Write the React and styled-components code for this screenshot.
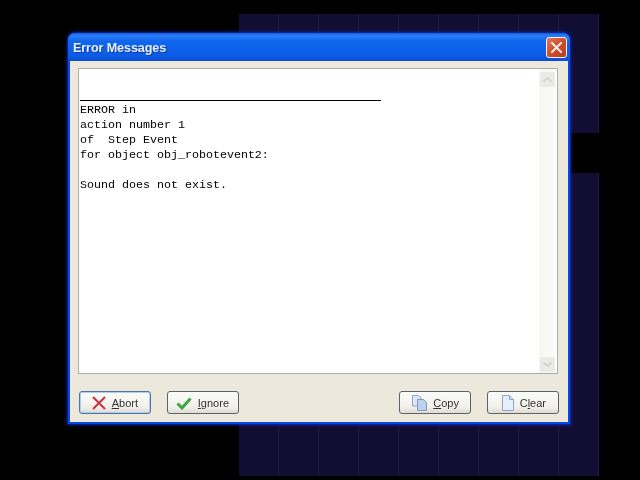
import React from "react";
import styled, {createGlobalStyle} from "styled-components";

const Global = createGlobalStyle`
  html, body {
    margin: 0;
    padding: 0;
    background: #000;
  }
`;

const Desktop = styled.div`
  position: relative;
  width: 640px;
  height: 480px;
  overflow: hidden;
  background: #000;
  filter: blur(0.4px);
`;

const Room = styled.div`
  position: absolute;
  left: 239px;
  top: 14px;
  width: 360px;
  height: 462px;
  background-color: #120d33;
  background-image: repeating-linear-gradient(
    to right,
    #120d33 0,
    #120d33 39px,
    #1f1b44 39px,
    #1f1b44 40px
  );
`;

const Gap = styled.div`
  position: absolute;
  right: 0;
  top: 119px;
  width: 60px;
  height: 40px;
  background: #000;
`;

const Window = styled.div`
  position: absolute;
  left: 68px;
  top: 33px;
  width: 502px;
  height: 391px;
  box-sizing: border-box;
  display: flex;
  flex-direction: column;
  border-radius: 7px 7px 0 0;
  background: #0a46e0;
  padding: 0 2px 2px;
  box-shadow: 0 0 3px 1px #0a2cc0;
`;

const TitleBar = styled.div`
  height: 28px;
  flex: none;
  margin: 0 -2px;
  padding: 0 3px 0 5px;
  display: flex;
  align-items: center;
  justify-content: space-between;
  border-radius: 7px 7px 0 0;
  background: linear-gradient(
    to bottom,
    #0f62ea 0,
    #2a7ef6 3px,
    #1066ee 8px,
    #0c5ce6 22px,
    #0a4ed6 100%
  );
`;

const Title = styled.span`
  padding-top: 2px;
  color: #e8f0ff;
  font: bold 12.6px "Liberation Sans", Arial, sans-serif;
  letter-spacing: -0.1px;
  text-shadow: 1px 1px 0 #0a3aa8;
`;

const CloseButton = styled.div`
  width: 21px;
  height: 21px;
  box-sizing: border-box;
  display: flex;
  align-items: center;
  justify-content: center;
  border: 1px solid #f2f2f2;
  border-radius: 3px;
  background: linear-gradient(135deg, #e07a5c, #cf4f2c 50%, #b83c1c);
`;

const Body = styled.div`
  flex: 1;
  display: flex;
  flex-direction: column;
  background: #ece9dc;
`;

const Editor = styled.div`
  height: 306px;
  margin: 7px 10px 0 8px;
  box-sizing: border-box;
  display: flex;
  justify-content: space-between;
  background: #fff;
  border: 1px solid #a8aeac;
`;

const Log = styled.div`
  padding: 31px 0 0 1px;
  color: #000;
  font: 11.67px/15px "Liberation Mono", "Courier New", monospace;
  white-space: pre;
`;

const Rule = styled.div`
  width: 301px;
  height: 1px;
  margin-bottom: 2px;
  background: #000;
`;

const Scrollbar = styled.div`
  width: 17px;
  margin-right: 1px;
  display: flex;
  flex-direction: column;
  justify-content: space-between;
  background: linear-gradient(to right, #f6f6f3, #fbfbf9);
`;

const ScrollButton = styled.div`
  height: 15px;
  margin: ${props => (props.$down ? "0 1px 1px" : "3px 1px 0")};
  display: flex;
  align-items: center;
  justify-content: center;
  background: #ebebe6;
`;

const ButtonRow = styled.div`
  margin: 17px 9px 0;
  display: flex;
  justify-content: space-between;
`;

const ButtonGroup = styled.div`
  display: flex;
  gap: 16px;
`;

const Button = styled.div`
  width: 72px;
  height: 23px;
  box-sizing: border-box;
  padding-right: ${props => props.$inset || 12}px;
  display: flex;
  align-items: center;
  justify-content: flex-end;
  gap: 6px;
  border: 1px solid ${props => (props.$focused ? "#4a76aa" : "#5a646c")};
  border-radius: 3px;
  background: linear-gradient(to bottom, #fbfbf8, #f2f1ec 70%, #dedbd2);
  box-shadow: ${props =>
    props.$focused ? "inset 0 0 0 1px #b4cbec" : "none"};
  color: #333;
  font: 11px "Liberation Sans", Arial, sans-serif;

  u {
    text-underline-offset: 1px;
  }
`;

const Chevron = ({down}) => (
  <svg width="11" height="7" viewBox="0 0 11 7">
    <path
      d={down ? "M1.5 1.5 5.5 5 9.5 1.5" : "M1.5 5.5 5.5 2 9.5 5.5"}
      fill="none"
      stroke="#d4d4ce"
      strokeWidth="2"
    />
  </svg>
);

const CloseIcon = () => (
  <svg width="13" height="13" viewBox="0 0 13 13">
    <path
      d="M2 2 11 11M11 2 2 11"
      stroke="#fbeee8"
      strokeWidth="2"
      strokeLinecap="round"
    />
  </svg>
);

const AbortIcon = () => (
  <svg width="14" height="14" viewBox="0 0 14 14">
    <path d="M1 1 13 13M13 1 1 13" stroke="#cf3040" strokeWidth="2" />
  </svg>
);

const IgnoreIcon = () => (
  <svg width="16" height="14" viewBox="0 0 16 14">
    <path
      d="M1.5 7.5 6 12 14.5 2.5"
      fill="none"
      stroke="#3ca845"
      strokeWidth="3"
    />
  </svg>
);

const CopyIcon = () => (
  <svg width="15" height="16" viewBox="0 0 15 16">
    <path d="M.5.5H6.5L9 3V11H.5Z" fill="#dbe6f6" stroke="#8ea6cc" />
    <path d="M5.5 4.5H11.5L14.5 7.5V15.5H5.5Z" fill="#bcd2ee" stroke="#7f9ac6" />
  </svg>
);

const ClearIcon = () => (
  <svg width="12" height="16" viewBox="0 0 12 16">
    <path d="M.5.5H7.5L11.5 4.5V15.5H.5Z" fill="#e6eefa" stroke="#8ea6cc" />
    <path d="M7.5.5V4.5H11.5" fill="#c4d6f0" stroke="#8ea6cc" />
  </svg>
);

const lines = [
  "ERROR in",
  "action number 1",
  "of  Step Event",
  "for object obj_robotevent2:",
  "",
  "Sound does not exist.",
];

export default function App() {
  return (
    <Desktop>
      <Global />
      <Room>
        <Gap />
      </Room>
      <Window>
        <TitleBar>
          <Title>Error Messages</Title>
          <CloseButton>
            <CloseIcon />
          </CloseButton>
        </TitleBar>
        <Body>
          <Editor>
            <Log>
              <Rule />
              {lines.join("\n")}
            </Log>
            <Scrollbar>
              <ScrollButton>
                <Chevron />
              </ScrollButton>
              <ScrollButton $down>
                <Chevron down />
              </ScrollButton>
            </Scrollbar>
          </Editor>
          <ButtonRow>
            <ButtonGroup>
              <Button $focused>
                <AbortIcon />
                <span>
                  <u>A</u>bort
                </span>
              </Button>
              <Button $inset={9}>
                <IgnoreIcon />
                <span>
                  <u>I</u>gnore
                </span>
              </Button>
            </ButtonGroup>
            <ButtonGroup>
              <Button $inset={11}>
                <CopyIcon />
                <span>
                  <u>C</u>opy
                </span>
              </Button>
              <Button>
                <ClearIcon />
                <span>
                  C<u>l</u>ear
                </span>
              </Button>
            </ButtonGroup>
          </ButtonRow>
        </Body>
      </Window>
    </Desktop>
  );
}
